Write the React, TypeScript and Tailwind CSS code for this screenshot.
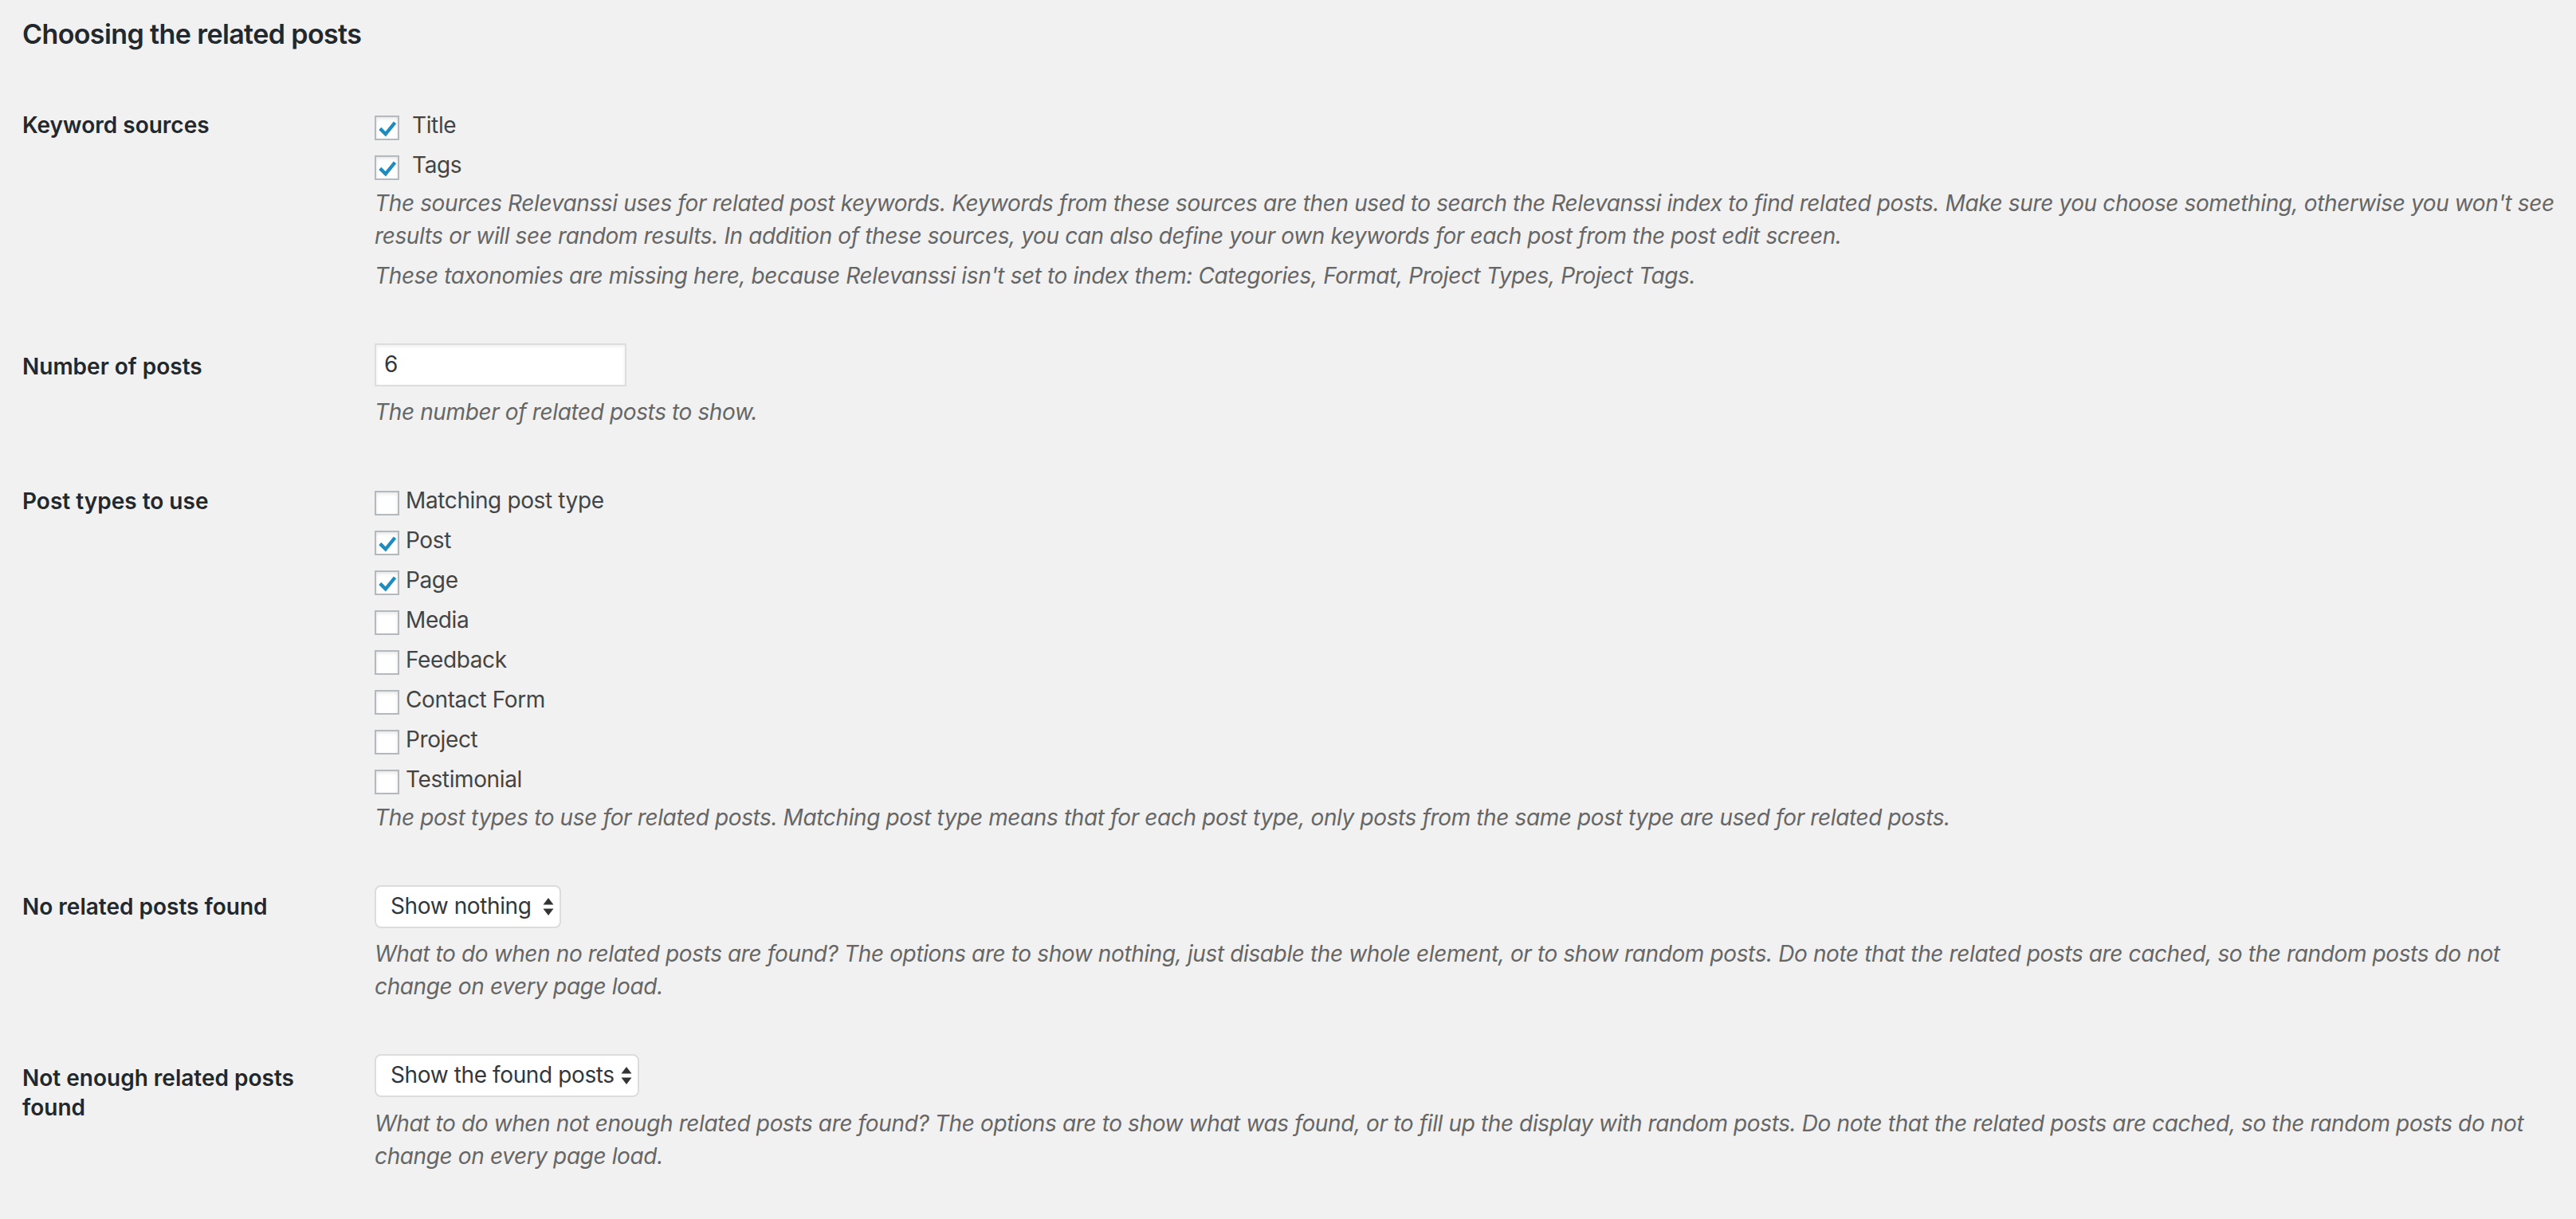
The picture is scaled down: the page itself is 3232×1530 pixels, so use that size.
import React from "react";

const font = "font-['Inter','Roboto',sans-serif]";

function Check() {
  return (
    <svg viewBox="0 0 31 31" className="absolute inset-0 h-full w-full">
      <path d="M5.5 16.5 L13.5 24.5 L27 8" fill="none" stroke="#1e8cbe" strokeWidth="5" strokeLinejoin="miter" />
    </svg>
  );
}

function Box({ checked }: { checked?: boolean }) {
  return (
    <span className="relative block h-[31px] w-[31px] shrink-0 border-2 border-[#b4b9be] bg-white shadow-[inset_0_2px_4px_rgba(0,0,0,0.1)]">
      {checked && <Check />}
    </span>
  );
}

function CheckRow({ label, checked, gap }: { label: string; checked?: boolean; gap: string }) {
  return (
    <label className={`flex h-[50px] items-center ${gap} text-[28px] tracking-[-0.38px] text-[#444]`}>
      <Box checked={checked} />
      <span className="pb-[6px]">{label}</span>
    </label>
  );
}

function Desc({ children, className = "" }: { children: React.ReactNode; className?: string }) {
  return <p className={`text-[28px] italic leading-[41px] tracking-[-0.38px] text-[#666] ${className}`}>{children}</p>;
}

function Select({ value, width }: { value: string; width: string }) {
  return (
    <div className={`flex h-[54px] ${width} items-center justify-between rounded-[8px] border-2 border-[#dcdcdc] bg-white pl-[18px] pr-[7px] text-[28px] tracking-[-0.38px] text-[#32373c]`}>
      <span className="pb-[2px]">{value}</span>
      <svg width="14" height="24" viewBox="0 0 14 24">
        <path d="M7 1 L13.5 9.5 L0.5 9.5 Z" fill="#333" />
        <path d="M0.5 14.5 L13.5 14.5 L7 23 Z" fill="#333" />
      </svg>
    </div>
  );
}

const labelCls = "w-[380px] text-[28px] font-semibold leading-[36px] text-[#23282d]";

export default function App() {
  return (
    <div className={`min-h-[1530px] bg-[#f1f1f1] pl-[28px] pr-[20px] pt-[19px] ${font}`}>
      <h2 className="h-[48px] text-[34px] font-semibold leading-[48px] tracking-[-0.6px] text-[#23282d]">Choosing the related posts</h2>

      <div className="mt-[68px] grid grid-cols-[442px_1fr]">
        <div className={`${labelCls} pt-[4px]`}>Keyword sources</div>
        <div>
          <CheckRow label="Title" checked gap="gap-[16px]" />
          <CheckRow label="Tags" checked gap="gap-[16px]" />
          <Desc>
            The sources Relevanssi uses for related post keywords. Keywords from these sources are then used to search the Relevanssi index to find related posts. Make sure you choose something, otherwise you won't see results or will see random results. In addition of these sources, you can also define your own keywords for each post from the post edit screen.
          </Desc>
          <Desc className="mt-[9px]">
            These taxonomies are missing here, because Relevanssi isn't set to index them: Categories, Format, Project Types, Project Tags.
          </Desc>
        </div>
      </div>

      <div className="mt-[64px] grid grid-cols-[442px_1fr]">
        <div className={`${labelCls} pt-[11px]`}>Number of posts</div>
        <div>
          <div className="flex h-[54px] w-[316px] items-center border-2 border-[#dddddd] bg-white pb-[2px] pl-[10px] text-[28px] text-[#32373c] shadow-[inset_0_2px_4px_rgba(0,0,0,0.07)]">6</div>
          <Desc className="mt-[12px]">The number of related posts to show.</Desc>
        </div>
      </div>

      <div className="mt-[68px] grid grid-cols-[442px_1fr]">
        <div className={`${labelCls} pt-[5px]`}>Post types to use</div>
        <div>
          <CheckRow label="Matching post type" gap="gap-[8px]" />
          <CheckRow label="Post" checked gap="gap-[8px]" />
          <CheckRow label="Page" checked gap="gap-[8px]" />
          <CheckRow label="Media" gap="gap-[8px]" />
          <CheckRow label="Feedback" gap="gap-[8px]" />
          <CheckRow label="Contact Form" gap="gap-[8px]" />
          <CheckRow label="Project" gap="gap-[8px]" />
          <CheckRow label="Testimonial" gap="gap-[8px]" />
          <Desc>
            The post types to use for related posts. Matching post type means that for each post type, only posts from the same post type are used for related posts.
          </Desc>
        </div>
      </div>

      <div className="mt-[64px] grid grid-cols-[442px_1fr]">
        <div className={`${labelCls} pt-[9px]`}>No related posts found</div>
        <div>
          <Select value="Show nothing" width="w-[234px]" />
          <Desc className="mt-[12px]">
            What to do when no related posts are found? The options are to show nothing, just disable the whole element, or to show random posts. Do note that the related posts are cached, so the random posts do not change on every page load.
          </Desc>
        </div>
      </div>

      <div className="mt-[64px] grid grid-cols-[442px_1fr]">
        <div className={`${labelCls} pt-[12px] leading-[37px]`}>Not enough related posts found</div>
        <div>
          <Select value="Show the found posts" width="w-[332px]" />
          <Desc className="mt-[13px]">
            What to do when not enough related posts are found? The options are to show what was found, or to fill up the display with random posts. Do note that the related posts are cached, so the random posts do not change on every page load.
          </Desc>
        </div>
      </div>
    </div>
  );
}
